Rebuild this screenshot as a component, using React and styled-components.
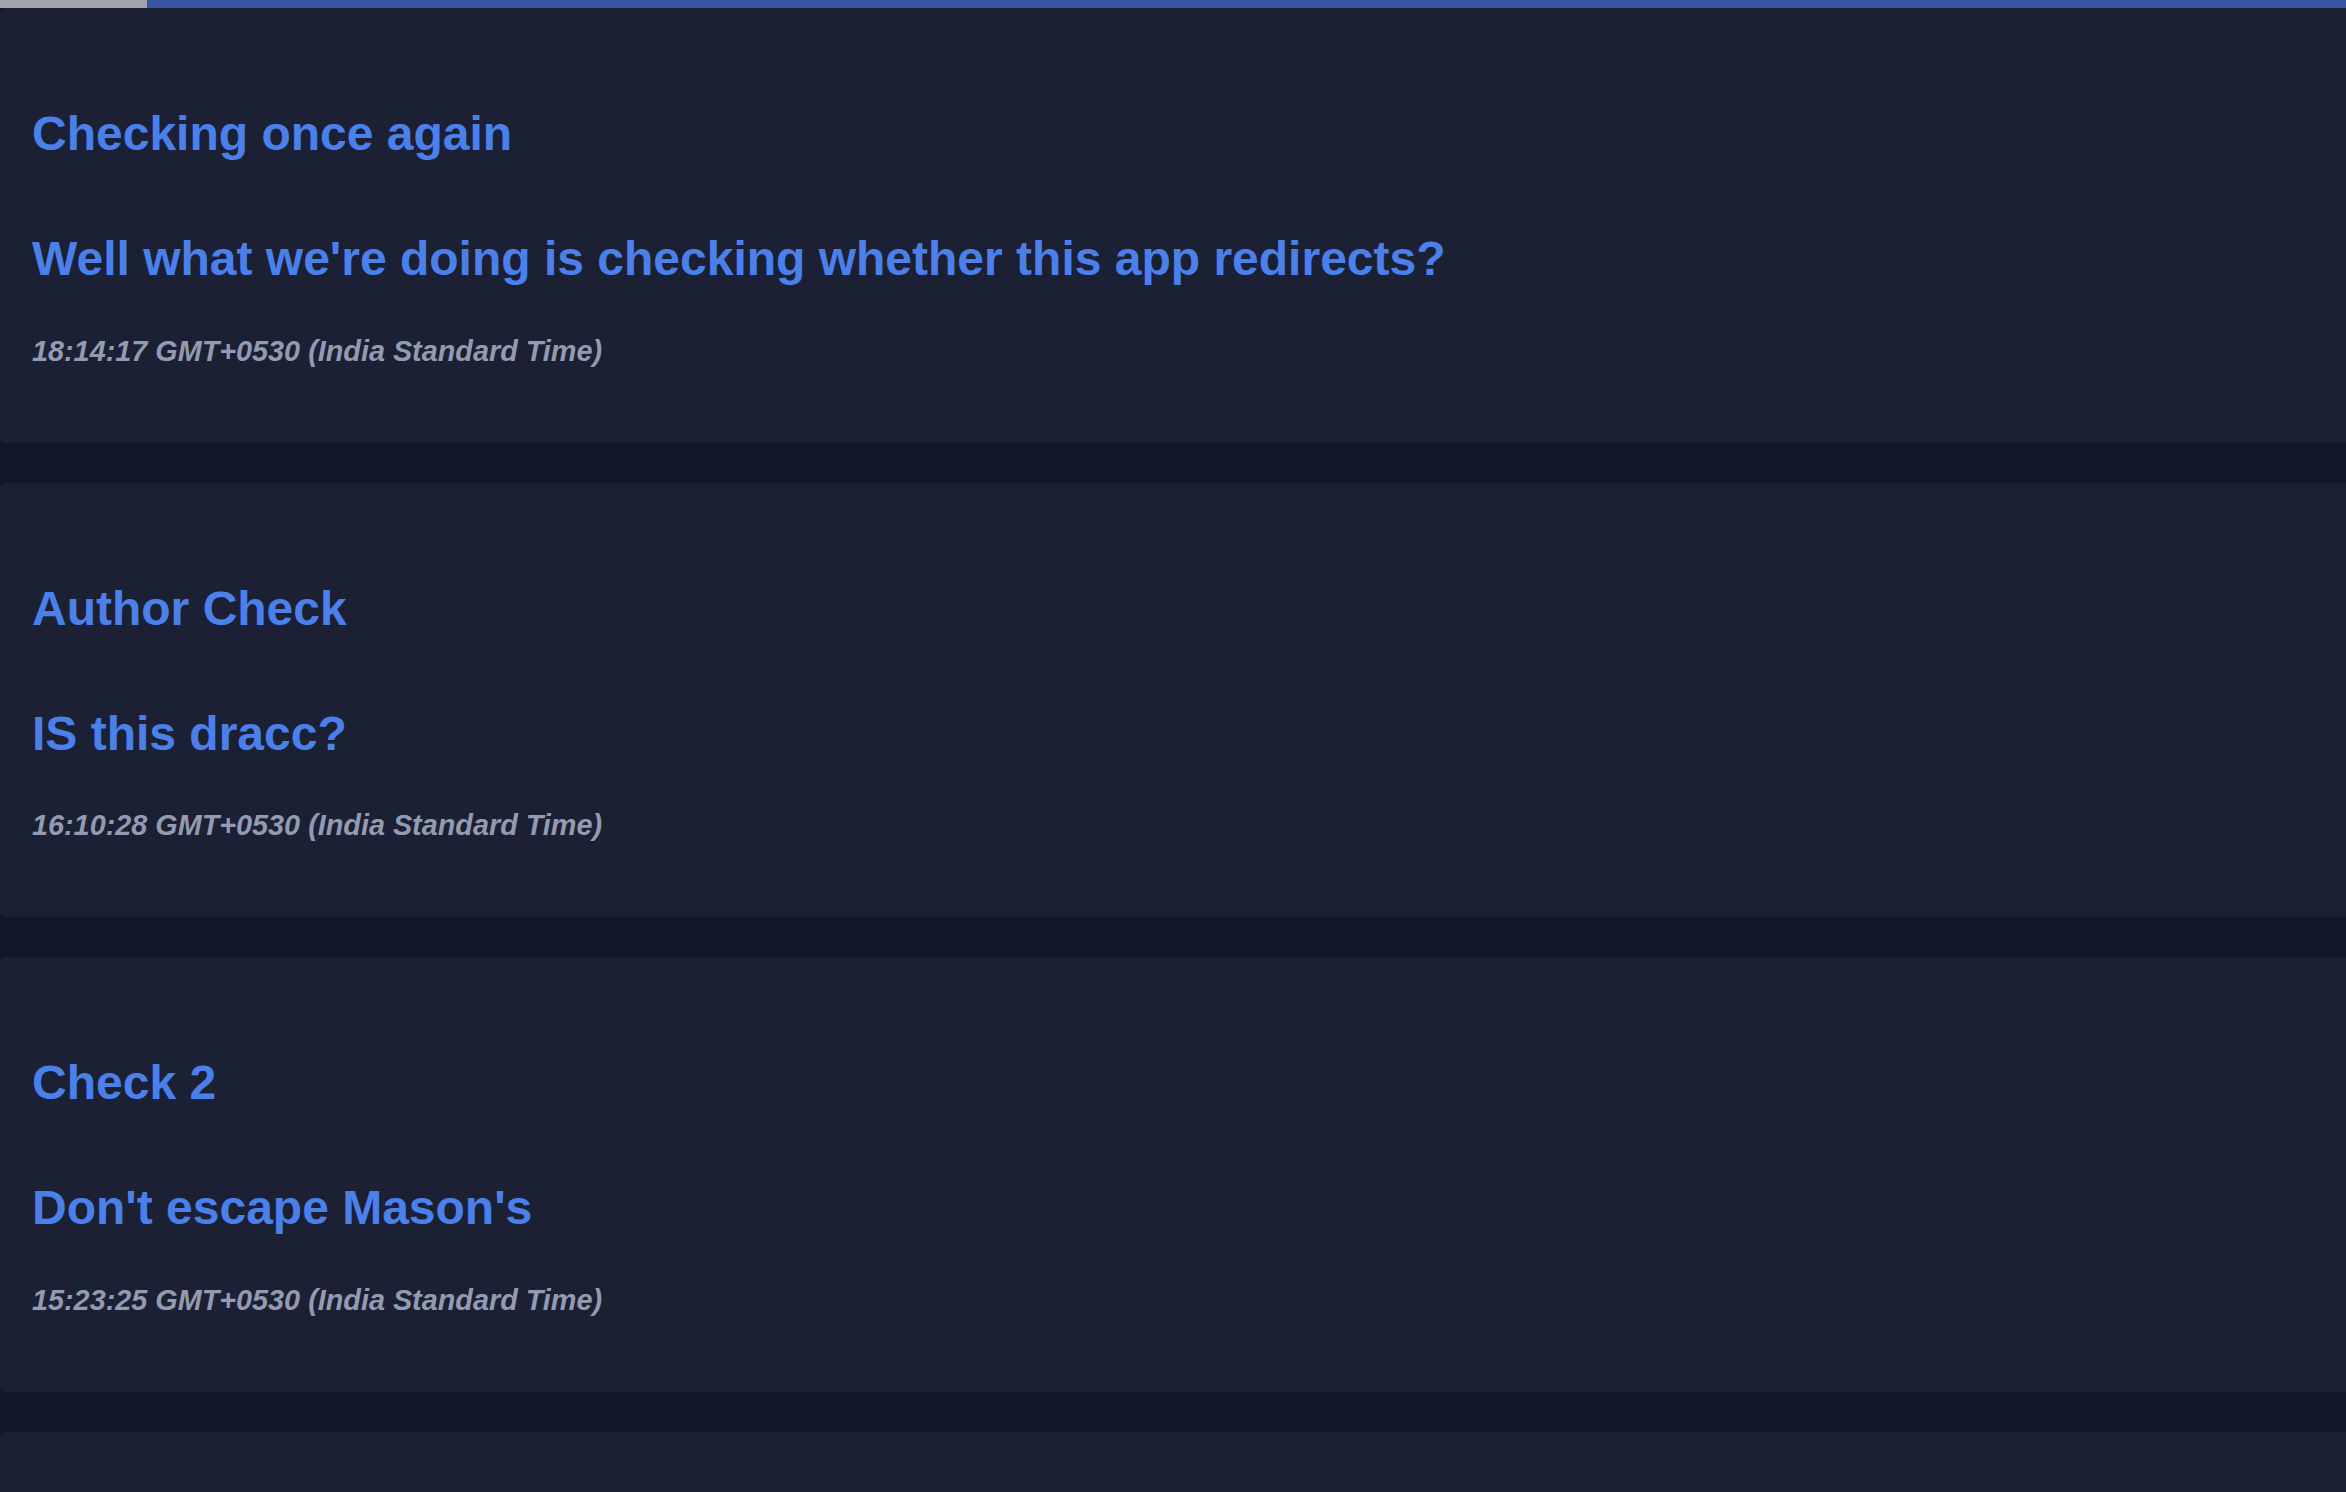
import React from "react";
import styled, { createGlobalStyle } from "styled-components";

const GlobalStyle = createGlobalStyle`
  html, body {
    margin: 0;
    padding: 0;
    background: #111628;
    overflow: hidden;
  }
  body {
    font-family: "Liberation Sans", Arial, Helvetica, sans-serif;
  }
`;

const Page = styled.div`
  display: flex;
  flex-direction: column;
  height: 100vh;
  overflow: hidden;
  background: #111628;
`;

const ProgressTrack = styled.div`
  display: flex;
  flex: none;
  height: 8px;
  background: #3456a3;
`;

const ProgressFill = styled.div`
  width: ${(p) => p.$width}px;
  background: #a1a4ab;
`;

const List = styled.div`
  display: flex;
  flex-direction: column;
  gap: 40px;
`;

const Card = styled.article`
  display: flex;
  flex: none;
  flex-direction: column;
  align-items: flex-start;
  background: #1c2034;
  border-radius: 6px 0 0 6px;
  padding: 98px 32px 76px;
  height: 434.5px;
  box-sizing: border-box;
`;

const Title = styled.h2`
  margin: 0;
  font-size: 48px;
  font-weight: 700;
  line-height: normal;
  color: #4b80ea;
`;

const Message = styled.h2`
  margin: 70px 0 0;
  font-size: 48px;
  font-weight: 700;
  line-height: normal;
  color: #4b80ea;
`;

const Time = styled.p`
  margin: 48.5px 0 0;
  font-size: 28.8px;
  font-weight: 700;
  font-style: italic;
  line-height: normal;
  color: #939bb0;
`;

const posts = [
  {
    title: "Checking once again",
    message: "Well what we're doing is checking whether this app redirects?",
    time: "18:14:17 GMT+0530 (India Standard Time)",
  },
  {
    title: "Author Check",
    message: "IS this dracc?",
    time: "16:10:28 GMT+0530 (India Standard Time)",
  },
  {
    title: "Check 2",
    message: "Don't escape Mason's",
    time: "15:23:25 GMT+0530 (India Standard Time)",
  },
];

export default function App() {
  return (
    <>
      <GlobalStyle />
      <Page>
        <ProgressTrack>
          <ProgressFill $width={147} />
        </ProgressTrack>
        <List>
          {posts.map((p, i) => (
            <Card key={i}>
              <Title>{p.title}</Title>
              <Message>{p.message}</Message>
              <Time>{p.time}</Time>
            </Card>
          ))}
          <Card aria-hidden="true" />
        </List>
      </Page>
    </>
  );
}
